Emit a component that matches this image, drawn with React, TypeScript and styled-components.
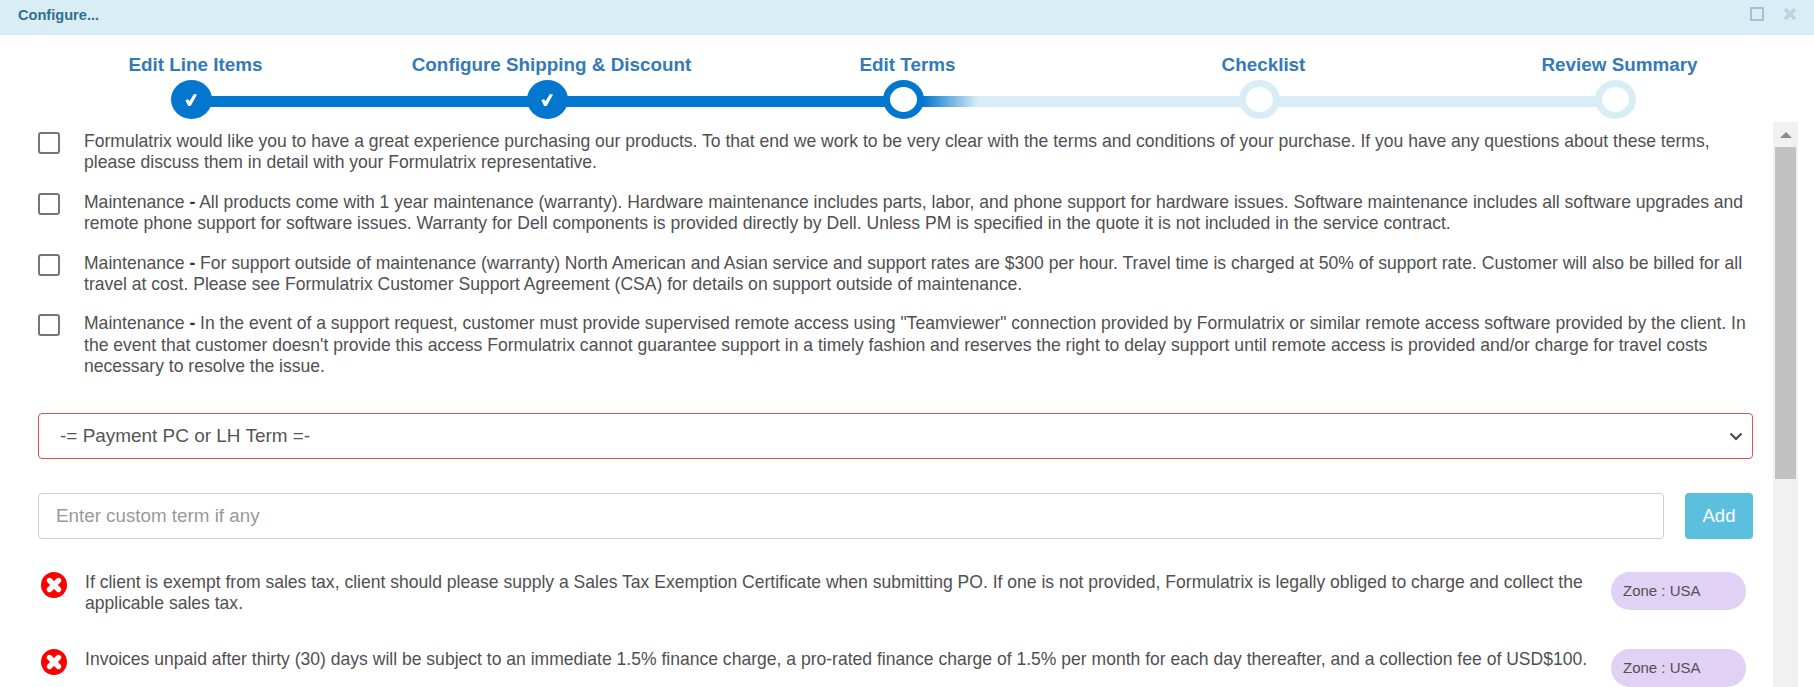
import React, { FC } from 'react'
import styled, { createGlobalStyle, css } from 'styled-components'

type StepStatus = 'done' | 'current' | 'todo'

const GlobalStyle = createGlobalStyle`
  html,
  body {
    margin: 0;
    padding: 0;
    height: 100%;
    overflow: hidden;
    background: #fff;
    font-family: 'Liberation Sans', Arial, sans-serif;
  }

  * {
    box-sizing: border-box;
  }
`

const Page = styled.div`
  display: flex;
  flex-direction: column;
  width: 1814px;
  height: 687px;
  overflow: hidden;
`

const TitleBar = styled.div`
  flex: none;
  display: flex;
  align-items: flex-start;
  justify-content: space-between;
  height: 35px;
  padding: 7px 17px 0 18px;
  background: #d9edf7;
  border-bottom: 1px solid #d5e9f3;
`

const Title = styled.span`
  font-size: 14.6px;
  font-weight: 700;
  line-height: 16px;
  color: #31708f;
`

const WindowButtons = styled.div`
  display: flex;
  gap: 19px;
  svg {
    display: block;
  }
`

const Stepper = styled.div`
  flex: none;
  display: flex;
  height: 84px;
  padding: 0 21px 0 13px;
  overflow: hidden;
`

const barStyles = {
  done: css`
    background: #0277cd;
  `,
  current: css`
    background: linear-gradient(to right, #0277cd 0, #0277cd 20px, #d9edf7 75px);
  `,
  todo: css`
    background: #d9edf7;
  `,
}

const Step = styled.div<{ $status: StepStatus; $last?: boolean }>`
  position: relative;
  flex: 0 0 356px;
  display: flex;
  flex-direction: column;
  align-items: center;
  padding-top: 18px;

  ${({ $last, $status }) =>
    !$last &&
    css`
      &::before {
        content: '';
        position: absolute;
        top: 61px;
        left: 50%;
        width: 100%;
        height: 11px;
        ${barStyles[$status]}
      }
    `}
`

const StepLabel = styled.div`
  margin-left: 9px;
  font-size: 18.85px;
  font-weight: 700;
  line-height: 24px;
  color: #337ab7;
  white-space: nowrap;
`

const StepDot = styled.div<{ $status: StepStatus }>`
  position: relative;
  display: flex;
  align-items: center;
  justify-content: center;
  width: 41px;
  height: 41px;
  margin-top: 3px;
  border-radius: 50%;
  background: ${({ $status }) => ($status === 'done' ? '#0277cd' : '#fff')};
  border: ${({ $status }) =>
    $status === 'current' ? '7px solid #0277cd' : $status === 'todo' ? '7px solid #d9edf7' : 'none'};
`

const Body = styled.div`
  flex: 1;
  display: flex;
  min-height: 0;
  padding-top: 3px;
`

const Content = styled.div`
  flex: none;
  width: 1773px;
  height: 100%;
  padding: 9px 20px 0 38px;
  overflow: hidden;
`

const TermList = styled.div`
  display: flex;
  flex-direction: column;
  gap: 18px;
`

const TermRow = styled.div`
  display: flex;
  gap: 24px;
`

const CheckBox = styled.span`
  flex: none;
  width: 22px;
  height: 22px;
  margin-top: 1px;
  border: 2px solid #757575;
  border-radius: 3px;
  background: #fff;
`

const TermText = styled.p`
  margin: 0;
  flex: 1;
  font-size: 17.56px;
  line-height: 21.4px;
  color: #505050;

  b {
    color: #333;
  }
`

const SelectWrap = styled.div`
  position: relative;
  margin-top: 35px;
`

const Select = styled.select`
  display: block;
  width: 100%;
  height: 46px;
  padding: 0 21px;
  appearance: none;
  border: 1px solid #d9534f;
  border-radius: 4px;
  background: #fff;
  font-family: inherit;
  font-size: 18.95px;
  color: #555;
`

const Chevron = styled.svg`
  position: absolute;
  top: 19px;
  right: 10px;
  pointer-events: none;
`

const CustomTermForm = styled.div`
  display: flex;
  gap: 21px;
  margin-top: 34px;
`

const Input = styled.input`
  flex: 1;
  height: 46px;
  padding: 0 17px;
  border: 1px solid #ccc;
  border-radius: 4px;
  font-family: inherit;
  font-size: 18.8px;
  color: #555;

  &::placeholder {
    color: #999;
    opacity: 1;
  }
`

const AddButton = styled.button`
  flex: none;
  width: 68px;
  height: 46px;
  border: none;
  border-radius: 4px;
  background: #5bc0de;
  font-family: inherit;
  font-size: 18.5px;
  color: #fff;
`

const CustomTerms = styled.div`
  display: flex;
  flex-direction: column;
  gap: 34.5px;
  margin-top: 33px;
`

const CustomRow = styled.div`
  display: flex;
  align-items: flex-start;
  padding-left: 3px;
`

const RemoveIcon = styled.svg`
  flex: none;
  margin-right: 18px;
`

const CustomText = styled.p`
  margin: 0;
  flex: none;
  width: 1526px;
  font-size: 17.56px;
  line-height: 21.4px;
  color: #505050;
`

const ZonePill = styled.span`
  flex: none;
  width: 135px;
  height: 38px;
  padding-left: 12px;
  border-radius: 19px;
  background: #e0d1f5;
  font-size: 15px;
  line-height: 38px;
  color: #505050;
`

const Scrollbar = styled.div`
  flex: none;
  display: flex;
  flex-direction: column;
  align-items: center;
  width: 25px;
  height: 100%;
  background: #f1f1f1;
`

const ScrollArrow = styled.svg`
  flex: none;
  margin: 10px 0 9px;
`

const ScrollThumb = styled.div`
  flex: none;
  width: 21px;
  height: 332px;
  background: #c1c1c1;
`

const steps: { label: string; status: StepStatus }[] = [
  { label: 'Edit Line Items', status: 'done' },
  { label: 'Configure Shipping & Discount', status: 'done' },
  { label: 'Edit Terms', status: 'current' },
  { label: 'Checklist', status: 'todo' },
  { label: 'Review Summary', status: 'todo' },
]

const terms: { lead?: string; text: string }[] = [
  {
    text: 'Formulatrix would like you to have a great experience purchasing our products. To that end we work to be very clear with the terms and conditions of your purchase. If you have any questions about these terms, please discuss them in detail with your Formulatrix representative.',
  },
  {
    lead: 'Maintenance',
    text: 'All products come with 1 year maintenance (warranty). Hardware maintenance includes parts, labor, and phone support for hardware issues. Software maintenance includes all software upgrades and remote phone support for software issues. Warranty for Dell components is provided directly by Dell. Unless PM is specified in the quote it is not included in the service contract.',
  },
  {
    lead: 'Maintenance',
    text: 'For support outside of maintenance (warranty) North American and Asian service and support rates are $300 per hour. Travel time is charged at 50% of support rate. Customer will also be billed for all travel at cost. Please see Formulatrix Customer Support Agreement (CSA) for details on support outside of maintenance.',
  },
  {
    lead: 'Maintenance',
    text: 'In the event of a support request, customer must provide supervised remote access using "Teamviewer" connection provided by Formulatrix or similar remote access software provided by the client. In the event that customer doesn\'t provide this access Formulatrix cannot guarantee support in a timely fashion and reserves the right to delay support until remote access is provided and/or charge for travel costs necessary to resolve the issue.',
  },
]

const customTerms = [
  'If client is exempt from sales tax, client should please supply a Sales Tax Exemption Certificate when submitting PO. If one is not provided, Formulatrix is legally obliged to charge and collect the applicable sales tax.',
  'Invoices unpaid after thirty (30) days will be subject to an immediate 1.5% finance charge, a pro-rated finance charge of 1.5% per month for each day thereafter, and a collection fee of USD$100.',
]

const CheckMark: FC = () => (
  <svg width="12" height="12" viewBox="0 0 12 12">
    <path d="M0.4 6.5 L2.9 5 L4.5 7.3 L8.9 0 L12 0.6 L5.7 12 L3.2 12 Z" fill="#fff" />
  </svg>
)

const ErrorIcon: FC = () => (
  <RemoveIcon width="26" height="26" viewBox="0 0 26 26">
    <circle cx="13" cy="13" r="13" fill="#f00" />
    <path d="M8.5 8.5 L17.5 17.5 M17.5 8.5 L8.5 17.5" stroke="#fff" strokeWidth="5.4" strokeLinecap="round" />
  </RemoveIcon>
)

export default function App() {
  return (
    <Page>
      <GlobalStyle />
      <TitleBar>
        <Title>Configure...</Title>
        <WindowButtons>
          <svg width="14" height="14" viewBox="0 0 14 14">
            <rect x="1" y="1" width="12" height="12" fill="none" stroke="#8fb9d2" strokeWidth="1.6" />
          </svg>
          <svg width="14" height="14" viewBox="0 0 14 14">
            <path d="M2 2 L12 12 M12 2 L2 12" stroke="#b5d5e5" strokeWidth="3.4" />
          </svg>
        </WindowButtons>
      </TitleBar>
      <Stepper>
        {steps.map((step, i) => (
          <Step key={step.label} $status={step.status} $last={i === steps.length - 1}>
            <StepLabel>{step.label}</StepLabel>
            <StepDot $status={step.status}>{step.status === 'done' && <CheckMark />}</StepDot>
          </Step>
        ))}
      </Stepper>
      <Body>
        <Content>
          <TermList>
            {terms.map((term) => (
              <TermRow key={term.text}>
                <CheckBox />
                <TermText>
                  {term.lead && (
                    <>
                      {term.lead} <b>-</b>{' '}
                    </>
                  )}
                  {term.text}
                </TermText>
              </TermRow>
            ))}
          </TermList>
          <SelectWrap>
            <Select defaultValue="">
              <option value="">-= Payment PC or LH Term =-</option>
            </Select>
            <Chevron width="14" height="9" viewBox="0 0 14 9">
              <path d="M1.5 1.5 L7 7 L12.5 1.5" fill="none" stroke="#444" strokeWidth="2" />
            </Chevron>
          </SelectWrap>
          <CustomTermForm>
            <Input placeholder="Enter custom term if any" />
            <AddButton>Add</AddButton>
          </CustomTermForm>
          <CustomTerms>
            {customTerms.map((text) => (
              <CustomRow key={text}>
                <ErrorIcon />
                <CustomText>{text}</CustomText>
                <ZonePill>Zone : USA</ZonePill>
              </CustomRow>
            ))}
          </CustomTerms>
        </Content>
        <Scrollbar>
          <ScrollArrow width="12" height="6" viewBox="0 0 12 6">
            <path d="M6 0 L12 6 L0 6 Z" fill="#8a8a8a" />
          </ScrollArrow>
          <ScrollThumb />
        </Scrollbar>
      </Body>
    </Page>
  )
}
